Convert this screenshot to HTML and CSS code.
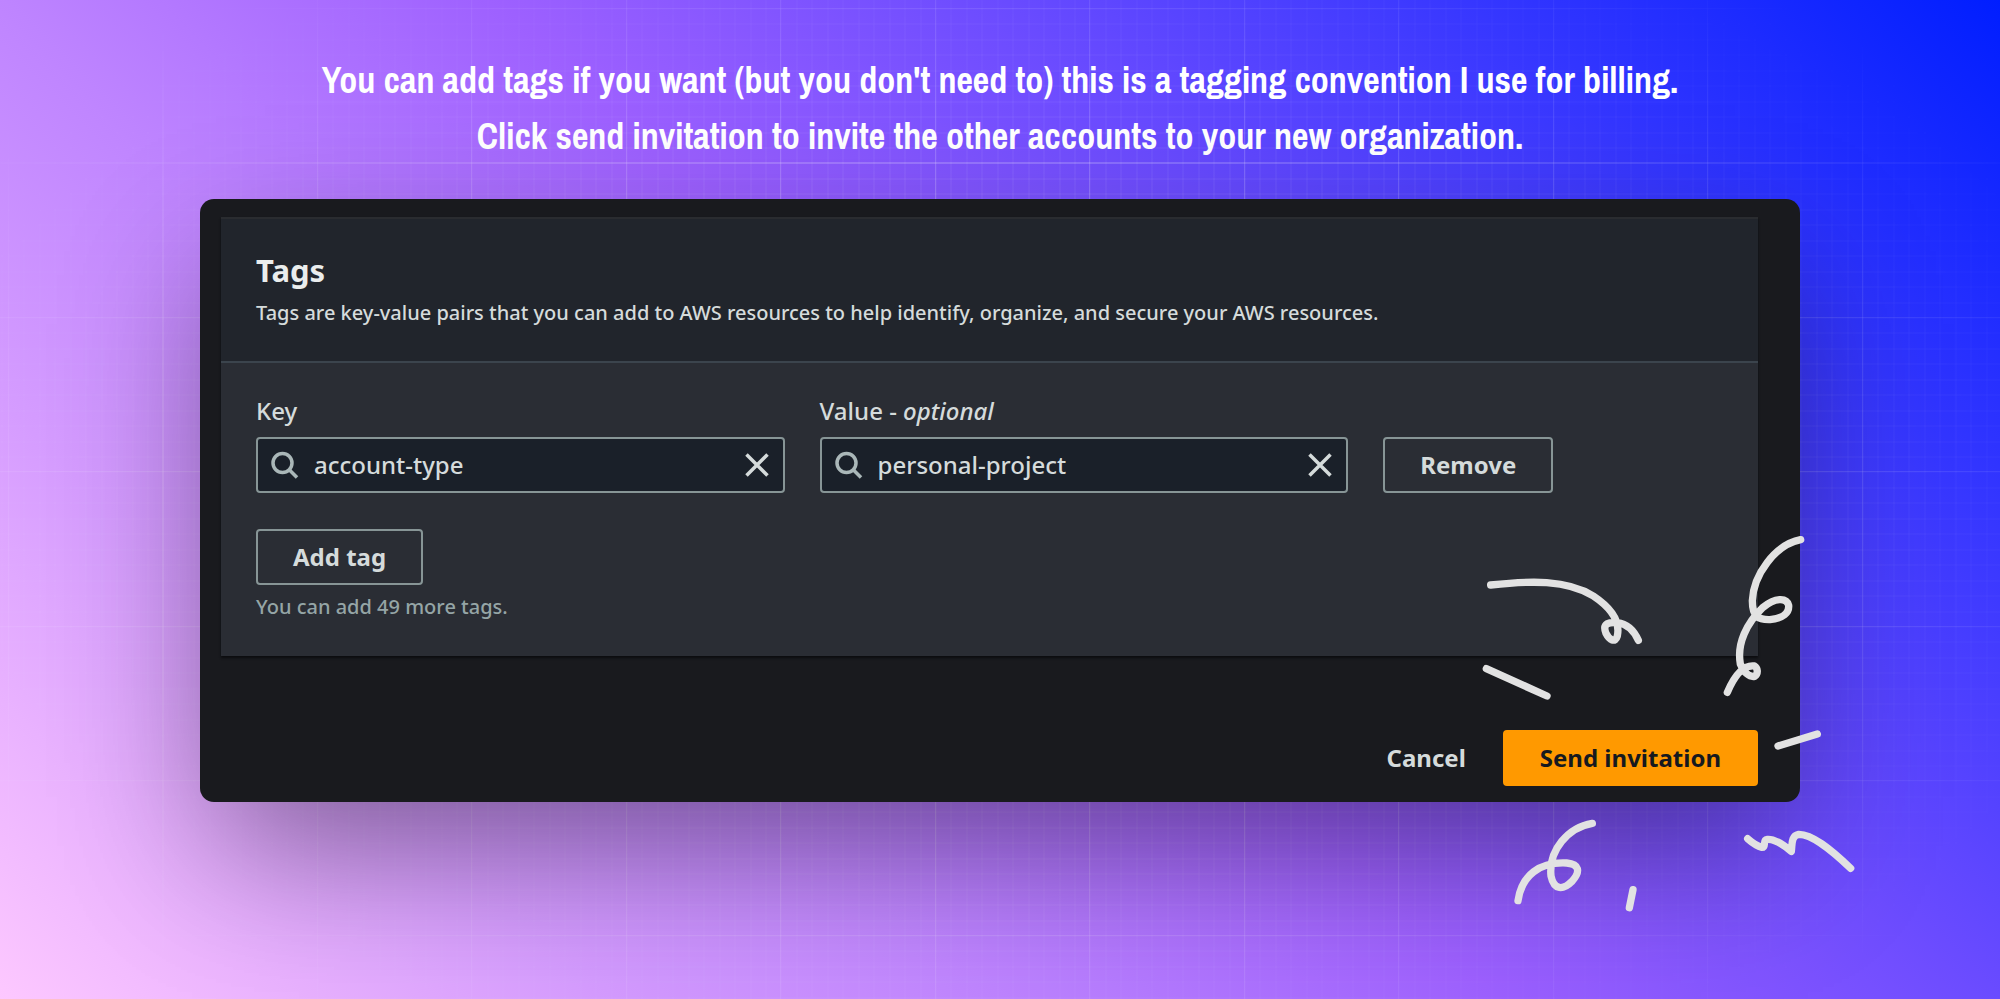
FILE: index.html
```html
<!DOCTYPE html>
<html lang="en">
<head>
<meta charset="utf-8">
<title>Tags</title>
<link rel="stylesheet" href="styles.css">
</head>
<body>
<main class="slide">
  <h1 class="caption">You can add tags if you want (but you don't need to) this is a tagging convention I use for billing.<br>Click send invitation to invite the other accounts to your new organization.</h1>
  <section class="window">
    <form class="form">
      <div class="panel">
        <header class="panel-header">
          <h2 class="panel-title">Tags</h2>
          <p class="panel-text">Tags are key-value pairs that you can add to AWS resources to help identify, organize, and secure your AWS resources.</p>
        </header>
        <div class="panel-body">
          <div class="tag-row">
            <div class="field">
              <label class="label" for="key">Key</label>
              <div class="search">
                <svg class="icon-search" viewBox="0 0 28 28"><circle cx="11.500" cy="12" r="9.500"/><path d="M18 18.500l8 8"/></svg>
                <input class="input" id="key" type="text" value="account-type">
                <button class="clear" type="button" aria-label="Clear key"><svg class="icon-close" viewBox="0 0 24 24"><path d="M1.500 1.500l21 21M22.500 1.500l-21 21"/></svg></button>
              </div>
            </div>
            <div class="field">
              <label class="label" for="value">Value - <i>optional</i></label>
              <div class="search">
                <svg class="icon-search" viewBox="0 0 28 28"><circle cx="11.500" cy="12" r="9.500"/><path d="M18 18.500l8 8"/></svg>
                <input class="input" id="value" type="text" value="personal-project">
                <button class="clear" type="button" aria-label="Clear value"><svg class="icon-close" viewBox="0 0 24 24"><path d="M1.500 1.500l21 21M22.500 1.500l-21 21"/></svg></button>
              </div>
            </div>
            <button class="button" type="button">Remove</button>
          </div>
          <button class="button" type="button">Add tag</button>
          <p class="hint">You can add 49 more tags.</p>
        </div>
      </div>
      <div class="actions">
        <button class="button button-link" type="button">Cancel</button>
        <button class="button button-primary" type="button">Send invitation</button>
      </div>
    </form>
    <svg class="doodles" viewBox="0 0 1440 1230" aria-hidden="true">
      <path d="M362 225C480 212 590 208 670 258C730 298 750 340 742 378C736 400 718 390 708 370C695 338 720 336 742 338C775 342 792 362 805 391"/>
      <path d="M349 476L531 558"/>
      <path d="M1292 89C1215 104 1150 195 1147 272C1147 320 1165 330 1200 329C1240 325 1258 308 1256 286C1250 262 1215 262 1178 293C1130 340 1100 400 1111 462C1122 488 1138 502 1154 499C1166 490 1163 474 1153 468C1120 464 1092 500 1072 547"/>
      <path d="M1224 708L1342 672"/>
      <path d="M667 940C595 952 535 1020 543 1098C552 1142 580 1140 605 1115C635 1082 625 1062 590 1059C510 1055 455 1095 444 1172"/>
      <path d="M789 1139L778 1193"/>
      <path d="M1133 986C1150 1001 1160 1008 1176 1012C1190 1012 1176 990 1192 988C1215 986 1240 1004 1264 1024C1267 1005 1262 978 1286 973C1325 972 1380 1016 1442 1075"/>
    </svg>
  </section>
</main>
</body>
</html>
```
FILE: styles.css
```css
*, *::before, *::after { box-sizing: border-box; }
body {
  margin: 0;
  font-family: "Noto Sans", "Open Sans", sans-serif;
  font-weight: 500;
  color: #d5dbdb;
}
h1, h2, p { margin: 0; }
.slide {
  position: relative;
  isolation: isolate;
  min-height: 100vh;
  overflow: hidden;
  padding: 52px 10%;
  background: linear-gradient(45deg, #fdc8ff 0%, #d59cff 20%, #bf85ff 33%, #9d60ff 50%, #6c4cff 66%, #3436ff 83%, #001eff 100%);
}
.slide::before {
  content: "";
  position: absolute;
  inset: 0;
  z-index: -1;
  --major: rgba(255, 255, 255, .2);
  --minor: rgba(255, 255, 255, .05);
  background:
    repeating-linear-gradient(to right, var(--major) 0 1px, transparent 1px 154.5px) 8px 0,
    repeating-linear-gradient(to bottom, var(--major) 0 1px, transparent 1px 154.5px) 0 8px,
    repeating-linear-gradient(to right, var(--minor) 0 2px, transparent 2px 15.45px) 8px 0,
    repeating-linear-gradient(to bottom, var(--minor) 0 2px, transparent 2px 15.45px) 0 8px;
  mask-image: radial-gradient(ellipse 62% 65% at center, #000 40%, transparent 100%);
}
.caption {
  margin-bottom: 35px;
  text-align: center;
  font: 700 36px/56px "Liberation Sans Narrow", "Archivo Narrow", sans-serif;
  color: #fff;
}
.window {
  position: relative;
  padding: 18px 42px 16px 21px;
  border-radius: 14px;
  background: #191a1e;
  box-shadow: 0 60px 140px -16px rgba(0, 0, 0, .42);
}
.panel {
  background: #2a2d34;
  box-shadow: 0 2px 2px #0c0d10;
}
.panel-header {
  padding: 31px 35px;
  border-top: 2px solid #2a2c30;
  border-bottom: 2px solid #3b444d;
  background: #21252c;
}
.panel-title { margin-bottom: 6px; font-size: 31px; line-height: 40px; color: #eaeded; }
.panel-text { font-size: 20px; line-height: 34px; }
.panel-body { padding: 30px 35px 33px; }
.tag-row {
  display: grid;
  grid-template-columns: 14fr 14fr 9fr;
  column-gap: 35px;
  align-items: end;
  justify-items: start;
  margin-bottom: 36px;
}
.field { width: 100%; }
.label { display: block; margin-bottom: 8px; font-size: 24px; line-height: 36px; }
.search {
  display: flex;
  align-items: center;
  gap: 15px;
  height: 56px;
  padding: 0 14px 0 13px;
  border: 2px solid #879596;
  border-radius: 4px;
  background: #1a2029;
}
.icon-search, .icon-close { display: block; fill: none; stroke-width: 3.5; }
.icon-search { width: 28px; height: 28px; stroke: #aab7b8; }
.icon-close { width: 24px; height: 24px; stroke: #d5dbdb; }
.input {
  flex: 1;
  min-width: 0;
  padding: 0;
  border: 0;
  outline: 0;
  background: none;
  font: 500 24px/36px "Noto Sans", "Open Sans", sans-serif;
  color: #d5dbdb;
}
.clear { padding: 0; border: 0; background: none; }
.button {
  height: 56px;
  padding: 0 35px;
  border: 2px solid #879596;
  border-radius: 4px;
  background: none;
  font: 700 24px/36px "Noto Sans", "Open Sans", sans-serif;
  color: #d5dbdb;
}
.button-link { border-color: transparent; }
.button-primary { border-color: #f90; background: #f90; color: #16191f; }
.hint { margin-top: 6px; font-size: 20px; line-height: 32px; color: #95a5a6; }
.actions { display: flex; justify-content: flex-end; margin-top: 74px; }
.doodles {
  position: absolute;
  right: -50px;
  bottom: -118px;
  width: 480px;
  height: 410px;
  overflow: visible;
  fill: none;
  stroke: #e2e2e2;
  stroke-width: 22;
  stroke-linecap: round;
  stroke-linejoin: round;
  pointer-events: none;
}
```
